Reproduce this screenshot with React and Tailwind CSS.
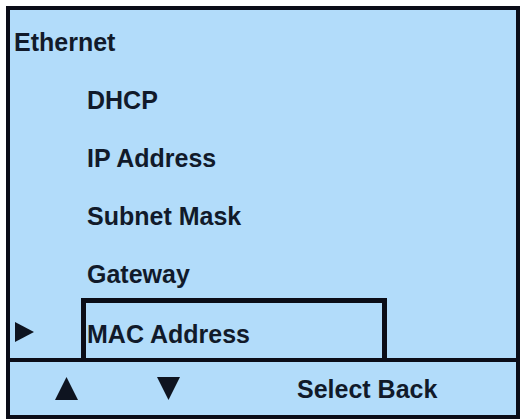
const items = ['DHCP', 'IP Address', 'Subnet Mask'];

function Triangle({ dir, className }) {
  const points = {
    right: '0,0 19,10 0,20',
    up: '11.5,0 23,23 0,23',
    down: '0,0 23,0 11.5,23',
  };
  return (
    <svg viewBox={dir === 'right' ? '0 0 19 20' : '0 0 23 23'} className={className}>
      <polygon points={points[dir]} fill="#0e1420" />
    </svg>
  );
}

export default function App() {
  return (
    <div className="w-[523px] h-[420px] bg-white pt-[6px] pl-[6px] font-['Liberation_Sans',Arial,sans-serif] font-bold text-[25px] text-[#111a2a]">
      <div className="w-[514px] h-[413px] border-4 border-[#0b0d17] bg-[#b2dcfa] flex flex-col">
        <div className="flex-1 flex flex-col pt-[3px]">
          <div className="h-[58px] leading-[58px] pl-[4px]">Ethernet</div>
          {items.map((item) => (
            <div key={item} className="h-[58px] leading-[58px] pl-[77px]">
              {item}
            </div>
          ))}
          <div className="h-[53px] leading-[58px] pl-[77px]">Gateway</div>
          <div className="flex flex-1">
            <div className="w-[71px] pl-[5px] pt-[24px]">
              <Triangle dir="right" className="w-[19px] h-[20px]" />
            </div>
            <div className="w-[306px] border-t-[5px] border-x-[5px] border-[#0b0d17] pt-[7px] pl-[1px] leading-[48px]">
              MAC Address
            </div>
          </div>
        </div>
        <div className="h-[58px] border-t-4 border-[#0b0d17] flex items-center pl-[45px]">
          <Triangle dir="up" className="w-[23px] h-[23px]" />
          <Triangle dir="down" className="w-[23px] h-[23px] ml-[79px]" />
          <span className="ml-[117px] pt-[2px] leading-none">Select Back</span>
        </div>
      </div>
    </div>
  );
}
